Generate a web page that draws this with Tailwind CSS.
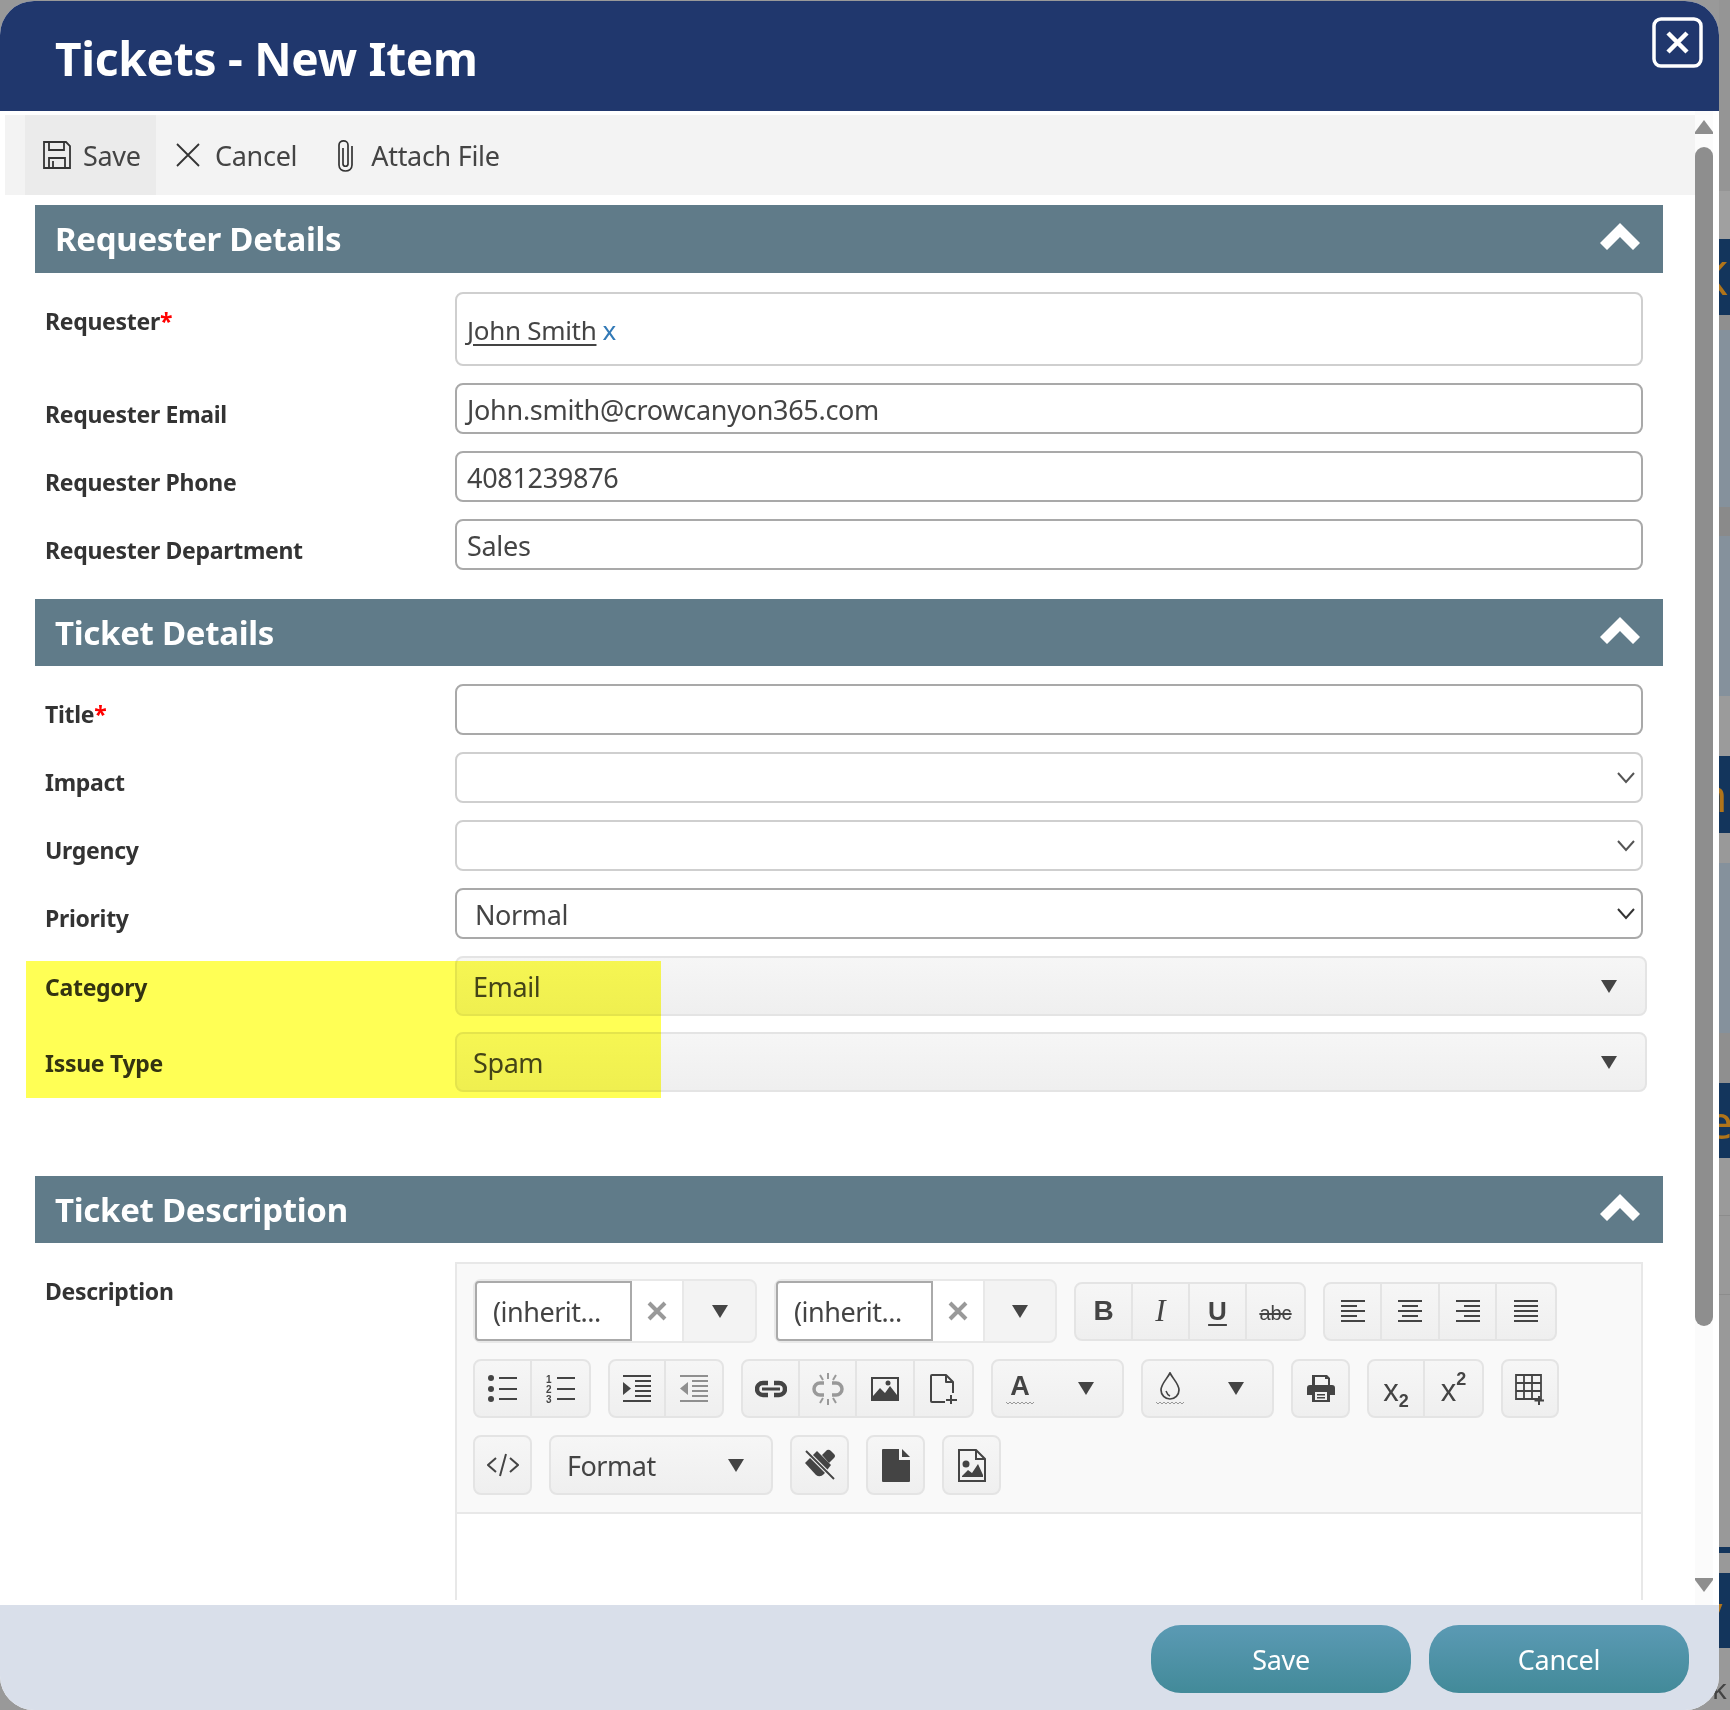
<!DOCTYPE html>
<html lang="en">
<head>
    <meta charset="UTF-8">
    <title>Tickets - New Item</title>
    <script src="https://cdn.jsdelivr.net/npm/@tailwindcss/browser@4"></script>
</head>
<body class="bg-[#999999] font-['Noto_Sans',sans-serif] text-[#444444]">
<div class="relative flex w-[1730px] h-[1710px] overflow-hidden">

    <!-- Page text showing through the modal's corner -->
    <span class="absolute left-[1712px] top-[1670px] text-[28px] leading-9 text-[#444444]">k</span>

    <!-- Modal -->
    <div class="relative w-[1719px] h-[1709px] mt-px flex flex-col rounded-[34px] overflow-hidden bg-white">
        <header class="h-[110px] shrink-0 bg-[#20376d] flex justify-between pl-[55px] pr-4">
            <h1 class="text-[46px] leading-[114px] font-bold tracking-[-0.25px] text-white">Tickets - New Item</h1>
            <svg class="mt-4" width="51" height="51" viewBox="0 0 51 51" fill="none" stroke="#fff">
                <rect x="2" y="2" width="47" height="47" rx="7" stroke-width="3.5"/>
                <path d="M16 16 L35 35 M35 16 L16 35" stroke-width="4.5"/>
            </svg>
        </header>

        <div class="flex flex-1 min-h-0">
            <div class="w-[1695px] shrink-0 overflow-hidden">
                <!-- Command bar -->
                <div class="ml-[5px] mt-1 h-20 bg-[#f3f3f3] flex items-center text-[27px] tracking-[-0.3px] text-[#444444]">
                    <div class="ml-5 w-[131px] h-full bg-[#ebebeb] flex items-center gap-3 pl-[18px]">
                        <svg width="28" height="28" viewBox="0 0 28 28" fill="none" stroke="#333" stroke-width="1.8"><path d="M1 1H23L27 5V27H1Z"/><path d="M6 1V9H21V1M6 27V17H22V27M10 20V27"/></svg>
                        <span class="pt-[2px]">Save</span>
                    </div>
                    <div class="ml-5 flex items-center gap-[15px]">
                        <svg width="24" height="24" viewBox="0 0 24 24" stroke="#333" stroke-width="1.8"><path d="M1 1L23 23M23 1L1 23"/></svg>
                        <span class="pt-[2px]">Cancel</span>
                    </div>
                    <div class="ml-[41px] flex items-center gap-[18px]">
                        <svg width="15" height="33" viewBox="0 0 15 33" fill="none" stroke="#333" stroke-width="1.7"><path d="M5 9V25C5 28 10 28 10 25V6C10 0.5 1 0.5 1 6V26C1 34 14 34 14 26V7"/></svg>
                        <span class="pt-[2px]">Attach File</span>
                    </div>
                </div>

                <div class="ml-[35px] w-[1628px]">
                    <!-- Requester Details -->
                    <div class="mt-[10px] h-[68px] bg-[#607b89] flex items-center justify-between pl-[20px] pr-[23px]">
                        <h2 class="text-[33px] font-bold tracking-[-0.3px] text-white">Requester Details</h2>
                        <svg class="mb-1" width="40" height="28" viewBox="0 0 40 28" fill="#fff"><path d="M20 0L40 20L33 27L20 14L7 27L0 20Z"/></svg>
                    </div>
                    <div class="mt-[19px] flex">
                        <label class="w-[420px] pl-[10px] pt-[15px] text-[23px] leading-7 font-bold tracking-[-0.3px] text-[#333333]">Requester<span class="text-[#ff0000]">*</span></label>
                        <div class="w-[1188px] h-[74px] border-2 border-[#cfcfcf] rounded-lg pl-[10px] pt-[2px] flex items-center text-[26px] tracking-[-0.3px]">
                            <span class="underline underline-offset-4">John Smith</span><span class="ml-[6px] text-[#337ab7]">x</span>
                        </div>
                    </div>
                    <div class="mt-[17px] flex h-[51px]">
                        <label class="w-[420px] pl-[10px] pt-[17px] text-[23px] leading-7 font-bold tracking-[-0.3px] text-[#333333]">Requester Email</label>
                        <div class="w-[1188px] border-2 border-[#a9a9a9] rounded-lg pl-[10px] pt-[3px] flex items-center text-[27px] tracking-[-0.3px]">John.smith@crowcanyon365.com</div>
                    </div>
                    <div class="mt-[17px] flex h-[51px]">
                        <label class="w-[420px] pl-[10px] pt-[17px] text-[23px] leading-7 font-bold tracking-[-0.3px] text-[#333333]">Requester Phone</label>
                        <div class="w-[1188px] border-2 border-[#a9a9a9] rounded-lg pl-[10px] pt-[3px] flex items-center text-[27px] tracking-[-0.3px]">4081239876</div>
                    </div>
                    <div class="mt-[17px] flex h-[51px]">
                        <label class="w-[420px] pl-[10px] pt-[17px] text-[23px] leading-7 font-bold tracking-[-0.3px] text-[#333333]">Requester Department</label>
                        <div class="w-[1188px] border-2 border-[#a9a9a9] rounded-lg pl-[10px] pt-[3px] flex items-center text-[27px] tracking-[-0.3px]">Sales</div>
                    </div>

                    <!-- Ticket Details -->
                    <div class="mt-[29px] h-[67px] bg-[#607b89] flex items-center justify-between pl-[20px] pr-[23px]">
                        <h2 class="text-[33px] font-bold tracking-[-0.3px] text-white">Ticket Details</h2>
                        <svg class="mb-1" width="40" height="28" viewBox="0 0 40 28" fill="#fff"><path d="M20 0L40 20L33 27L20 14L7 27L0 20Z"/></svg>
                    </div>
                    <div class="mt-[18px] flex h-[51px]">
                        <label class="w-[420px] pl-[10px] pt-[16px] text-[23px] leading-7 font-bold tracking-[-0.3px] text-[#333333]">Title<span class="text-[#ff0000]">*</span></label>
                        <div class="w-[1188px] border-2 border-[#a9a9a9] rounded-lg"></div>
                    </div>
                    <div class="mt-[17px] flex h-[51px]">
                        <label class="w-[420px] pl-[10px] pt-[16px] text-[23px] leading-7 font-bold tracking-[-0.3px] text-[#333333]">Impact</label>
                        <div class="w-[1188px] border-2 border-[#cfcfcf] rounded-lg flex items-center justify-end pr-[6px]">
                            <svg width="18" height="12" viewBox="0 0 18 12" fill="none" stroke="#555" stroke-width="2"><path d="M1 1L9 10L17 1"/></svg>
                        </div>
                    </div>
                    <div class="mt-[17px] flex h-[51px]">
                        <label class="w-[420px] pl-[10px] pt-[16px] text-[23px] leading-7 font-bold tracking-[-0.3px] text-[#333333]">Urgency</label>
                        <div class="w-[1188px] border-2 border-[#cfcfcf] rounded-lg flex items-center justify-end pr-[6px]">
                            <svg width="18" height="12" viewBox="0 0 18 12" fill="none" stroke="#555" stroke-width="2"><path d="M1 1L9 10L17 1"/></svg>
                        </div>
                    </div>
                    <div class="mt-[17px] flex h-[51px]">
                        <label class="w-[420px] pl-[10px] pt-[16px] text-[23px] leading-7 font-bold tracking-[-0.3px] text-[#333333]">Priority</label>
                        <div class="w-[1188px] border-2 border-[#a9a9a9] rounded-lg flex items-center justify-between pl-[18px] pr-[6px] text-[27px] tracking-[-0.4px]">
                            <span class="pt-[3px]">Normal</span>
                            <svg width="18" height="12" viewBox="0 0 18 12" fill="none" stroke="#333" stroke-width="2"><path d="M1 1L9 10L17 1"/></svg>
                        </div>
                    </div>
                    <div class="mt-[17px] flex h-[60px]">
                        <label class="w-[420px] pl-[10px] pt-[17px] text-[23px] leading-7 font-bold tracking-[-0.3px] text-[#333333]">Category</label>
                        <div class="w-[1192px] border-2 border-[#e4e4e4] rounded-lg bg-linear-to-b from-[#f6f6f6] to-[#efefef] flex items-center justify-between pl-[16px] pr-[28px] text-[27px] tracking-[-0.4px]">
                            <span class="pt-[2px]">Email</span>
                            <svg width="16" height="13" viewBox="0 0 16 13" fill="#444"><path d="M0 0H16L8 13Z"/></svg>
                        </div>
                    </div>
                    <div class="mt-[16px] flex h-[60px]">
                        <label class="w-[420px] pl-[10px] pt-[17px] text-[23px] leading-7 font-bold tracking-[-0.3px] text-[#333333]">Issue Type</label>
                        <div class="w-[1192px] border-2 border-[#e4e4e4] rounded-lg bg-linear-to-b from-[#f6f6f6] to-[#efefef] flex items-center justify-between pl-[16px] pr-[28px] text-[27px] tracking-[-0.4px]">
                            <span class="pt-[2px]">Spam</span>
                            <svg width="16" height="13" viewBox="0 0 16 13" fill="#444"><path d="M0 0H16L8 13Z"/></svg>
                        </div>
                    </div>

                    <!-- Ticket Description -->
                    <div class="mt-[84px] h-[67px] bg-[#607b89] flex items-center justify-between pl-[20px] pr-[23px]">
                        <h2 class="text-[33px] font-bold tracking-[-0.3px] text-white">Ticket Description</h2>
                        <svg class="mb-1" width="40" height="28" viewBox="0 0 40 28" fill="#fff"><path d="M20 0L40 20L33 27L20 14L7 27L0 20Z"/></svg>
                    </div>
                    <div class="mt-[19px] flex">
                        <label class="w-[420px] pl-[10px] pt-[15px] text-[23px] leading-7 font-bold tracking-[-0.3px] text-[#333333]">Description</label>
                        <div class="w-[1188px] h-[338px] border-x-2 border-t-2 border-[#e8e8e8]">
                            <!-- Editor toolbar -->
                            <div class="h-[250px] bg-[#f9f9f9] border-b-2 border-[#e8e8e8] pl-[16px] pt-[15px]">
                                <!-- row 1 -->
                                <div class="flex items-center h-16 gap-[17px]">
                                    <div class="w-[284px] h-16 flex border-2 border-[#e8e8e8] rounded-lg bg-[#f3f3f3]">
                                        <div class="w-[157px] border-2 border-[#aaaaaa] bg-white rounded-l-sm pl-[16px] pt-[2px] flex items-center text-[27px] tracking-[-0.5px]">(inherit...</div>
                                        <div class="w-[50px] bg-white flex items-center justify-center">
                                            <svg width="20" height="20" viewBox="0 0 20 20" stroke="#999" stroke-width="4"><path d="M2 2L18 18M18 2L2 18"/></svg>
                                        </div>
                                        <div class="flex-1 border-l-2 border-[#e8e8e8] flex items-center justify-center">
                                            <svg width="16" height="13" viewBox="0 0 16 13" fill="#444"><path d="M0 0H16L8 13Z"/></svg>
                                        </div>
                                    </div>
                                    <div class="w-[283px] h-16 flex border-2 border-[#e8e8e8] rounded-lg bg-[#f3f3f3]">
                                        <div class="w-[157px] border-2 border-[#aaaaaa] bg-white rounded-l-sm pl-[16px] pt-[2px] flex items-center text-[27px] tracking-[-0.5px]">(inherit...</div>
                                        <div class="w-[50px] bg-white flex items-center justify-center">
                                            <svg width="20" height="20" viewBox="0 0 20 20" stroke="#999" stroke-width="4"><path d="M2 2L18 18M18 2L2 18"/></svg>
                                        </div>
                                        <div class="flex-1 border-l-2 border-[#e8e8e8] flex items-center justify-center">
                                            <svg width="16" height="13" viewBox="0 0 16 13" fill="#444"><path d="M0 0H16L8 13Z"/></svg>
                                        </div>
                                    </div>
                                    <div class="flex h-[59px] border-2 border-[#e4e4e4] rounded-lg bg-linear-to-b from-[#f6f6f6] to-[#efefef] divide-x-2 divide-[#e4e4e4]">
                                        <div class="w-[57px] flex items-center justify-center font-['Liberation_Sans',sans-serif] text-[28px] font-bold">B</div>
                                        <div class="w-[57px] flex items-center justify-center font-['Liberation_Serif',serif] text-[31px] italic">I</div>
                                        <div class="w-[57px] flex items-center justify-center font-['Liberation_Sans',sans-serif] text-[26px] font-bold underline underline-offset-4">U</div>
                                        <div class="w-[57px] flex items-center justify-center font-['Liberation_Sans',sans-serif] text-[20px] pt-1 line-through">abc</div>
                                    </div>
                                    <div class="flex h-[59px] border-2 border-[#e4e4e4] rounded-lg bg-linear-to-b from-[#f6f6f6] to-[#efefef] divide-x-2 divide-[#e4e4e4]">
                                        <div class="w-[57px] flex items-center justify-center">
                                            <svg width="26" height="26" viewBox="0 0 26 26" stroke="#444" stroke-width="2"><path d="M1 2H25M1 7H17M1 12H25M1 17H17M1 22H25" transform="translate(0 1)"/></svg>
                                        </div>
                                        <div class="w-[58px] flex items-center justify-center">
                                            <svg width="26" height="26" viewBox="0 0 26 26" stroke="#444" stroke-width="2"><path d="M1 2H25M5 7H21M1 12H25M5 17H21M1 22H25" transform="translate(0 1)"/></svg>
                                        </div>
                                        <div class="w-[57px] flex items-center justify-center">
                                            <svg width="26" height="26" viewBox="0 0 26 26" stroke="#444" stroke-width="2"><path d="M1 2H25M9 7H25M1 12H25M9 17H25M1 22H25" transform="translate(0 1)"/></svg>
                                        </div>
                                        <div class="w-[58px] flex items-center justify-center">
                                            <svg width="26" height="26" viewBox="0 0 26 26" stroke="#444" stroke-width="2"><path d="M1 2H25M1 7H25M1 12H25M1 17H25M1 22H25" transform="translate(0 1)"/></svg>
                                        </div>
                                    </div>
                                </div>

                                <!-- row 2 -->
                                <div class="mt-4 flex h-[59px] gap-[17px]">
                                    <div class="flex border-2 border-[#e4e4e4] rounded-lg bg-linear-to-b from-[#f6f6f6] to-[#efefef] divide-x-2 divide-[#e4e4e4]">
                                        <div class="w-[57px] flex items-center justify-center">
                                            <svg width="30" height="30" viewBox="0 0 30 30" fill="#444"><circle cx="3" cy="4" r="3"/><circle cx="3" cy="15" r="3"/><circle cx="3" cy="25" r="3"/><path d="M11 3h18v2h-18zM11 14h18v2h-18zM11 24h18v2h-18z"/></svg>
                                        </div>
                                        <div class="w-[57px] flex items-center justify-center">
                                            <svg width="30" height="30" viewBox="0 0 30 30" fill="#444"><text x="0" y="9" font-size="10" font-weight="700" font-family="Liberation Sans">1</text><text x="0" y="19" font-size="10" font-weight="700" font-family="Liberation Sans">2</text><text x="0" y="29" font-size="10" font-weight="700" font-family="Liberation Sans">3</text><path d="M11 3h18v2h-18zM11 14h18v2h-18zM11 24h18v2h-18z"/></svg>
                                        </div>
                                    </div>
                                    <div class="flex border-2 border-[#e4e4e4] rounded-lg bg-linear-to-b from-[#f6f6f6] to-[#efefef] divide-x-2 divide-[#e4e4e4]">
                                        <div class="w-[56px] flex items-center justify-center">
                                            <svg width="28" height="28" viewBox="0 0 28 28" fill="#444"><path d="M0 0h28v2h-28zM12 5h16v2h-16zM12 10h16v2h-16zM12 15h16v2h-16zM12 20h16v2h-16zM0 25h28v2h-28zM0 7L8 13.500L0 20Z"/></svg>
                                        </div>
                                        <div class="w-[56px] flex items-center justify-center">
                                            <svg width="28" height="28" viewBox="0 0 28 28" fill="#8f8f8f"><path d="M0 0h28v2h-28zM12 5h16v2h-16zM12 10h16v2h-16zM12 15h16v2h-16zM12 20h16v2h-16zM0 25h28v2h-28zM8 7L0 13.500L8 20Z"/></svg>
                                        </div>
                                    </div>
                                    <div class="flex border-2 border-[#e4e4e4] rounded-lg bg-linear-to-b from-[#f6f6f6] to-[#efefef] divide-x-2 divide-[#e4e4e4]">
                                        <div class="w-[57px] flex items-center justify-center">
                                            <svg width="32" height="18" viewBox="0 0 32 18" fill="none" stroke="#444"><path d="M13 3H8a6 6 0 0 0 0 12h5M19 3h5a6 6 0 0 1 0 12h-5" stroke-width="4.5"/><path d="M7 9H25" stroke-width="3"/></svg>
                                        </div>
                                        <div class="w-[57px] flex items-center justify-center">
                                            <svg width="32" height="32" viewBox="0 0 32 32" fill="none" stroke="#999"><path d="M12 10H8a6 6 0 0 0 0 12h4M20 10h4a6 6 0 0 1 0 12h-4" stroke-width="3.5"/><path d="M16 0V6M16 26V32M8 2L11 7M24 2L21 7M8 30L11 25M24 30L21 25" stroke-width="2"/></svg>
                                        </div>
                                        <div class="w-[58px] flex items-center justify-center">
                                            <svg width="28" height="26" viewBox="0 0 28 26" fill="#444"><path fill-rule="evenodd" d="M0 1H28V25H0ZM2 3V20L9 12L14 17L19 10L26 19V3Z"/><circle cx="17" cy="7" r="2.5"/></svg>
                                        </div>
                                        <div class="w-[57px] flex items-center justify-center">
                                            <svg width="30" height="30" viewBox="0 0 30 30" fill="none" stroke="#444" stroke-width="2"><path d="M16 28H3a1 1 0 0 1-1-1V2a1 1 0 0 1 1-1H17L24 8V19M17 1V8H24" stroke-linejoin="round"/><path d="M22 21V30M17 26H28"/></svg>
                                        </div>
                                    </div>
                                    <div class="w-[133px] border-2 border-[#e4e4e4] rounded-lg bg-linear-to-b from-[#f6f6f6] to-[#efefef] flex items-center pl-[13px] gap-[44px]">
                                        <div class="w-7 flex flex-col items-center">
                                            <span class="font-['Liberation_Sans',sans-serif] text-[27px] leading-7 font-bold">A</span>
                                            <svg class="mt-px" width="28" height="4" viewBox="0 0 28 4" fill="none" stroke="#999" stroke-width="1"><path d="M0 1L2 3L4 1L6 3L8 1L10 3L12 1L14 3L16 1L18 3L20 1L22 3L24 1L26 3L28 1"/></svg>
                                        </div>
                                        <svg width="16" height="13" viewBox="0 0 16 13" fill="#444"><path d="M0 0H16L8 13Z"/></svg>
                                    </div>
                                    <div class="w-[133px] border-2 border-[#e4e4e4] rounded-lg bg-linear-to-b from-[#f6f6f6] to-[#efefef] flex items-center pl-[13px] gap-[44px]">
                                        <div class="w-7 flex flex-col items-center">
                                            <svg width="22" height="28" viewBox="0 0 22 28" fill="none" stroke="#444" stroke-width="1.7"><path d="M11 1C8 7 2 12 2 18a9 9 0 0 0 18 0C20 12 14 7 11 1Z"/><path d="M7 19c1 3 2 4 4 5" stroke-width="1.5"/></svg>
                                            <svg class="mt-px" width="28" height="4" viewBox="0 0 28 4" fill="none" stroke="#999" stroke-width="1"><path d="M0 1L2 3L4 1L6 3L8 1L10 3L12 1L14 3L16 1L18 3L20 1L22 3L24 1L26 3L28 1"/></svg>
                                        </div>
                                        <svg width="16" height="13" viewBox="0 0 16 13" fill="#444"><path d="M0 0H16L8 13Z"/></svg>
                                    </div>
                                    <div class="w-[59px] border-2 border-[#e4e4e4] rounded-lg bg-linear-to-b from-[#f6f6f6] to-[#efefef] flex items-center justify-center">
                                        <svg width="28" height="29" viewBox="0 0 28 29" fill="#444"><path fill-rule="evenodd" d="M6 1H20L23 4V11H25Q28 11 28 14V21H23V28H5V21H0V14Q0 11 3 11H5V1ZM8 3V11H21V5H18V3ZM8 18V26H20V18Z"/><path d="M10 20h8v1.500h-8zM10 23h8v1.500h-8z"/></svg>
                                    </div>
                                    <div class="flex border-2 border-[#e4e4e4] rounded-lg bg-linear-to-b from-[#f6f6f6] to-[#efefef] divide-x-2 divide-[#e4e4e4]">
                                        <div class="w-[56px] flex items-center justify-center">
                                            <span class="font-['Liberation_Sans',sans-serif] text-[31px] leading-none pt-[3px]">x<sub class="text-[18px] font-bold align-[-2px]">2</sub></span>
                                        </div>
                                        <div class="w-[57px] flex items-center justify-center">
                                            <span class="font-['Liberation_Sans',sans-serif] text-[31px] leading-none pt-[3px]">x<sup class="text-[18px] font-bold align-[7px]">2</sup></span>
                                        </div>
                                    </div>
                                    <div class="w-[58px] border-2 border-[#e4e4e4] rounded-lg bg-linear-to-b from-[#f6f6f6] to-[#efefef] flex items-center justify-center">
                                        <svg width="30" height="32" viewBox="0 0 30 32" fill="none" stroke="#444" stroke-width="1.8"><path d="M1 2H26V26H1ZM1 10H26M1 18H26M9 2V26M17 2V26"/><path d="M24 23V32M19.500 27.500H29" stroke-width="2" stroke="#444"/></svg>
                                    </div>
                                </div>

                                <!-- row 3 -->
                                <div class="mt-[17px] flex h-[60px] gap-[17px]">
                                    <div class="w-[59px] border-2 border-[#e4e4e4] rounded-lg bg-linear-to-b from-[#f6f6f6] to-[#efefef] flex items-center justify-center">
                                        <svg width="32" height="24" viewBox="0 0 32 24" fill="none" stroke="#444" stroke-width="2"><path d="M9 5L1 12L9 19M23 5L31 12L23 19M19 1L13 23"/></svg>
                                    </div>
                                    <div class="w-[224px] border-2 border-[#e4e4e4] rounded-lg bg-linear-to-b from-[#f6f6f6] to-[#efefef] flex items-center justify-between pl-[16px] pr-[27px] text-[27px] tracking-[-0.5px]">
                                        <span class="pt-[2px]">Format</span>
                                        <svg width="16" height="13" viewBox="0 0 16 13" fill="#444"><path d="M0 0H16L8 13Z"/></svg>
                                    </div>
                                    <div class="w-[59px] border-2 border-[#e4e4e4] rounded-lg bg-linear-to-b from-[#f6f6f6] to-[#efefef] flex items-center justify-center">
                                        <svg width="32" height="32" viewBox="0 0 32 32" fill="#444"><path d="M1 14L13 2L27 16L20 25Q16 29 12 26Z"/><path d="M18 6L23 1Q25 0 27 2L30 5Q32 7 30 9L25 14Z"/><path d="M2 2L30 30" stroke="#f5f5f5" stroke-width="4"/><path d="M2 2L30 30" stroke="#444" stroke-width="2"/></svg>
                                    </div>
                                    <div class="w-[59px] border-2 border-[#e4e4e4] rounded-lg bg-linear-to-b from-[#f6f6f6] to-[#efefef] flex items-center justify-center">
                                        <svg width="28" height="33" viewBox="0 0 28 33" fill="#444"><path d="M1 0H17V11H28V32a1 1 0 0 1-1 1H1a1 1 0 0 1-1-1V1a1 1 0 0 1 1-1Z"/><path d="M20 0L28 8H20Z"/></svg>
                                    </div>
                                    <div class="w-[59px] border-2 border-[#e4e4e4] rounded-lg bg-linear-to-b from-[#f6f6f6] to-[#efefef] flex items-center justify-center">
                                        <svg width="28" height="33" viewBox="0 0 28 33" fill="none" stroke="#444" stroke-width="2"><path d="M1 1H18L27 10V32H1ZM18 1V10H27"/><circle cx="8" cy="15" r="3.500" fill="#444" stroke="none"/><path d="M4 27L10 21L14 24L20 15L25 26V28H4Z" fill="#444" stroke="none"/></svg>
                                    </div>
                                </div>
                            </div>
                        </div>
                    </div>
                </div>
            </div>

            <!-- Scrollbar -->
            <div class="w-[18px] shrink-0 bg-[#fbfbfb] flex flex-col items-center pt-[9px]">
                <svg class="shrink-0" width="18" height="14" viewBox="0 0 18 14" fill="#8e8e8e"><path d="M9 0L18 12V14H0V12Z"/></svg>
                <div class="mt-[13px] w-[18px] h-[1179px] bg-[#8e8e8e] rounded-full"></div>
                <svg class="mt-auto mb-[13px] shrink-0" width="18" height="14" viewBox="0 0 18 14" fill="#8e8e8e"><path d="M9 14L18 2V0H0V2Z"/></svg>
            </div>
        </div>

        <footer class="h-[105px] shrink-0 bg-[#d9dfea] flex justify-end gap-[18px] pt-5 pr-[30px]">
            <button class="w-[260px] h-[68px] pt-[2px] rounded-[30px] bg-linear-to-b from-[#5b9ab4] to-[#428a99] text-white text-[27px] tracking-[-0.3px]">Save</button>
            <button class="w-[260px] h-[68px] pt-[2px] rounded-[30px] bg-linear-to-b from-[#5b9ab4] to-[#428a99] text-white text-[27px] tracking-[-0.3px]">Cancel</button>
        </footer>
    </div>

    <!-- Page behind the modal -->
    <div class="w-[11px] shrink-0 flex flex-col overflow-hidden text-[46px] leading-[76px]">
        <div class="h-[191px] bg-[#959595]"></div>
        <div class="h-[48px] bg-[#a0a0a0]"></div>
        <div class="h-[76px] bg-[#13355c] text-[#b0741a]"><span class="block -ml-[20px]">K</span></div>
        <div class="h-[15px] bg-[#8f8f8f]"></div>
        <div class="h-[177px] bg-[#85919c]"></div>
        <div class="h-[29px] bg-[#8a8a8a]"></div>
        <div class="h-[160px] bg-[#85919c]"></div>
        <div class="h-[60px] bg-[#9b9b9b]"></div>
        <div class="h-[77px] bg-[#13355c] text-[#b0741a]"><span class="block -ml-[20px]">n</span></div>
        <div class="h-[30px] bg-[#999999]"></div>
        <div class="h-[170px] bg-[#85919c]"></div>
        <div class="h-[50px] bg-[#8f8f8f]"></div>
        <div class="h-[75px] bg-[#13355c] text-[#b0741a]"><span class="block -ml-[12px]">e</span></div>
        <div class="h-[57px] bg-[#9a9a9a]"></div>
        <div class="h-[80px] border-y border-[#8c8c8c] bg-[#999999]"></div>
        <div class="h-[252px] bg-[#999999]"></div>
        <div class="h-[6px] bg-[#13355c]"></div>
        <div class="h-[20px] bg-[#999999]"></div>
        <div class="h-[75px] bg-[#13355c] text-[#b0741a]"><span class="block -ml-[20px]">v</span></div>
        <div class="h-[62px] bg-[#999999]"></div>
    </div>

    <!-- Yellow highlight over the two fields -->
    <div class="absolute left-[26px] top-[961px] w-[635px] h-[137px] bg-[#ffff55] mix-blend-multiply"></div>
</div>
</body>
</html>
